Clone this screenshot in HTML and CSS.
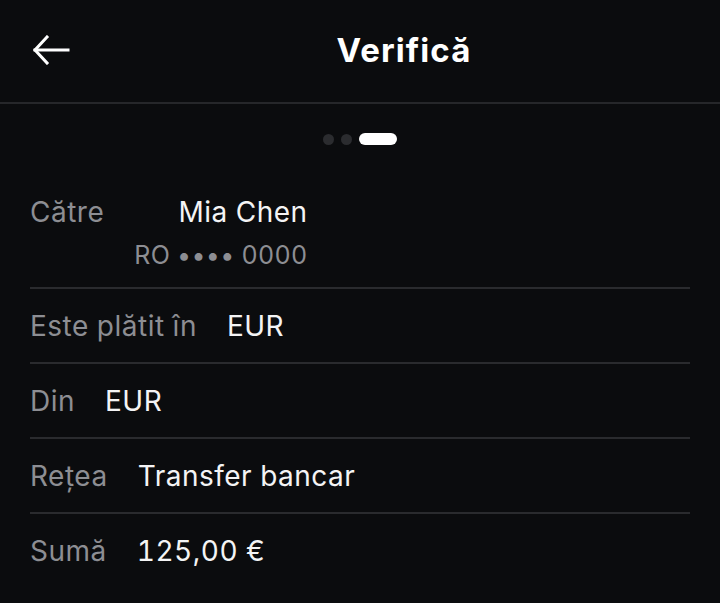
FILE: index.html
```html
<!DOCTYPE html>
<html lang="ro">
<head>
<meta charset="utf-8">
<title>Verifică</title>
<link rel="stylesheet" href="styles.css">
</head>
<body>
<div class="screen">
  <header class="topbar">
    <button class="back" aria-label="Înapoi">
      <svg width="38" height="30" viewBox="0 0 38 30" fill="none" stroke="#fff" stroke-width="3" stroke-linecap="square" stroke-linejoin="miter">
        <path d="M3 15 H36"/>
        <path d="M15 2 L3 15 L15 28"/>
      </svg>
    </button>
    <h1 class="title">Verifică</h1>
    <span class="spacer"></span>
  </header>

  <div class="steps">
    <span class="dot"></span>
    <span class="dot"></span>
    <span class="pill"></span>
  </div>

  <div class="details">
    <div class="row first">
      <span class="label">Către</span>
      <div class="value stack">
        <span>Mia Chen</span>
        <span class="sub">RO •••• 0000</span>
      </div>
    </div>
    <div class="row">
      <span class="label">Este plătit în</span>
      <span class="value">EUR</span>
    </div>
    <div class="row">
      <span class="label">Din</span>
      <span class="value">EUR</span>
    </div>
    <div class="row">
      <span class="label">Rețea</span>
      <span class="value">Transfer bancar</span>
    </div>
    <div class="row last">
      <span class="label">Sumă</span>
      <span class="value">125,00 €</span>
    </div>
  </div>
</div>
</body>
</html>
```

FILE: styles.css
```css
* { box-sizing: border-box; }
html, body {
  margin: 0;
  padding: 0;
  background: #0b0c0e;
  color: #f4f4f5;
  font-family: Inter, "Noto Sans", sans-serif;
}
.screen {
  width: 720px;
  min-height: 603px;
}
.topbar {
  height: 104px;
  display: grid;
  grid-template-columns: 100px 1fr 12px;
  align-items: center;
  border-bottom: 2px solid #26272a;
  padding-bottom: 2px;
}
.back {
  background: none;
  border: 0;
  padding: 0 0 0 32px;
  display: flex;
  align-items: center;
  cursor: pointer;
  height: 40px;
}
.title {
  margin: 0;
  text-align: center;
  font-size: 33px;
  font-weight: 700;
  letter-spacing: 1.1px;
  color: #ffffff;
}
.steps {
  display: flex;
  justify-content: center;
  align-items: center;
  gap: 7px;
  height: 71px;
  padding-bottom: 1px;
}
.dot {
  width: 11px;
  height: 11px;
  border-radius: 50%;
  background: #2b2c2f;
}
.pill {
  width: 38px;
  height: 12px;
  border-radius: 6px;
  background: #ffffff;
}
.details {
  padding: 0 30px;
}
.row {
  display: flex;
  align-items: flex-start;
  gap: 30px;
  padding: 19px 0 18px;
  border-bottom: 2px solid #2a2b2e;
  font-size: 28px;
  line-height: 36px;
  letter-spacing: 0.5px;
  font-feature-settings: "tnum" 1;
}
.row.first { padding-bottom: 17px; }
.row.last { border-bottom: 0; }
.label {
  color: #8d8e93;
}
.value {
  color: #f4f4f5;
}
.stack {
  display: flex;
  flex-direction: column;
  align-items: flex-end;
  gap: 10px;
}
.sub {
  color: #8d8e93;
  font-size: 25px;
  line-height: 30px;
  letter-spacing: 0.3px;
}
```
